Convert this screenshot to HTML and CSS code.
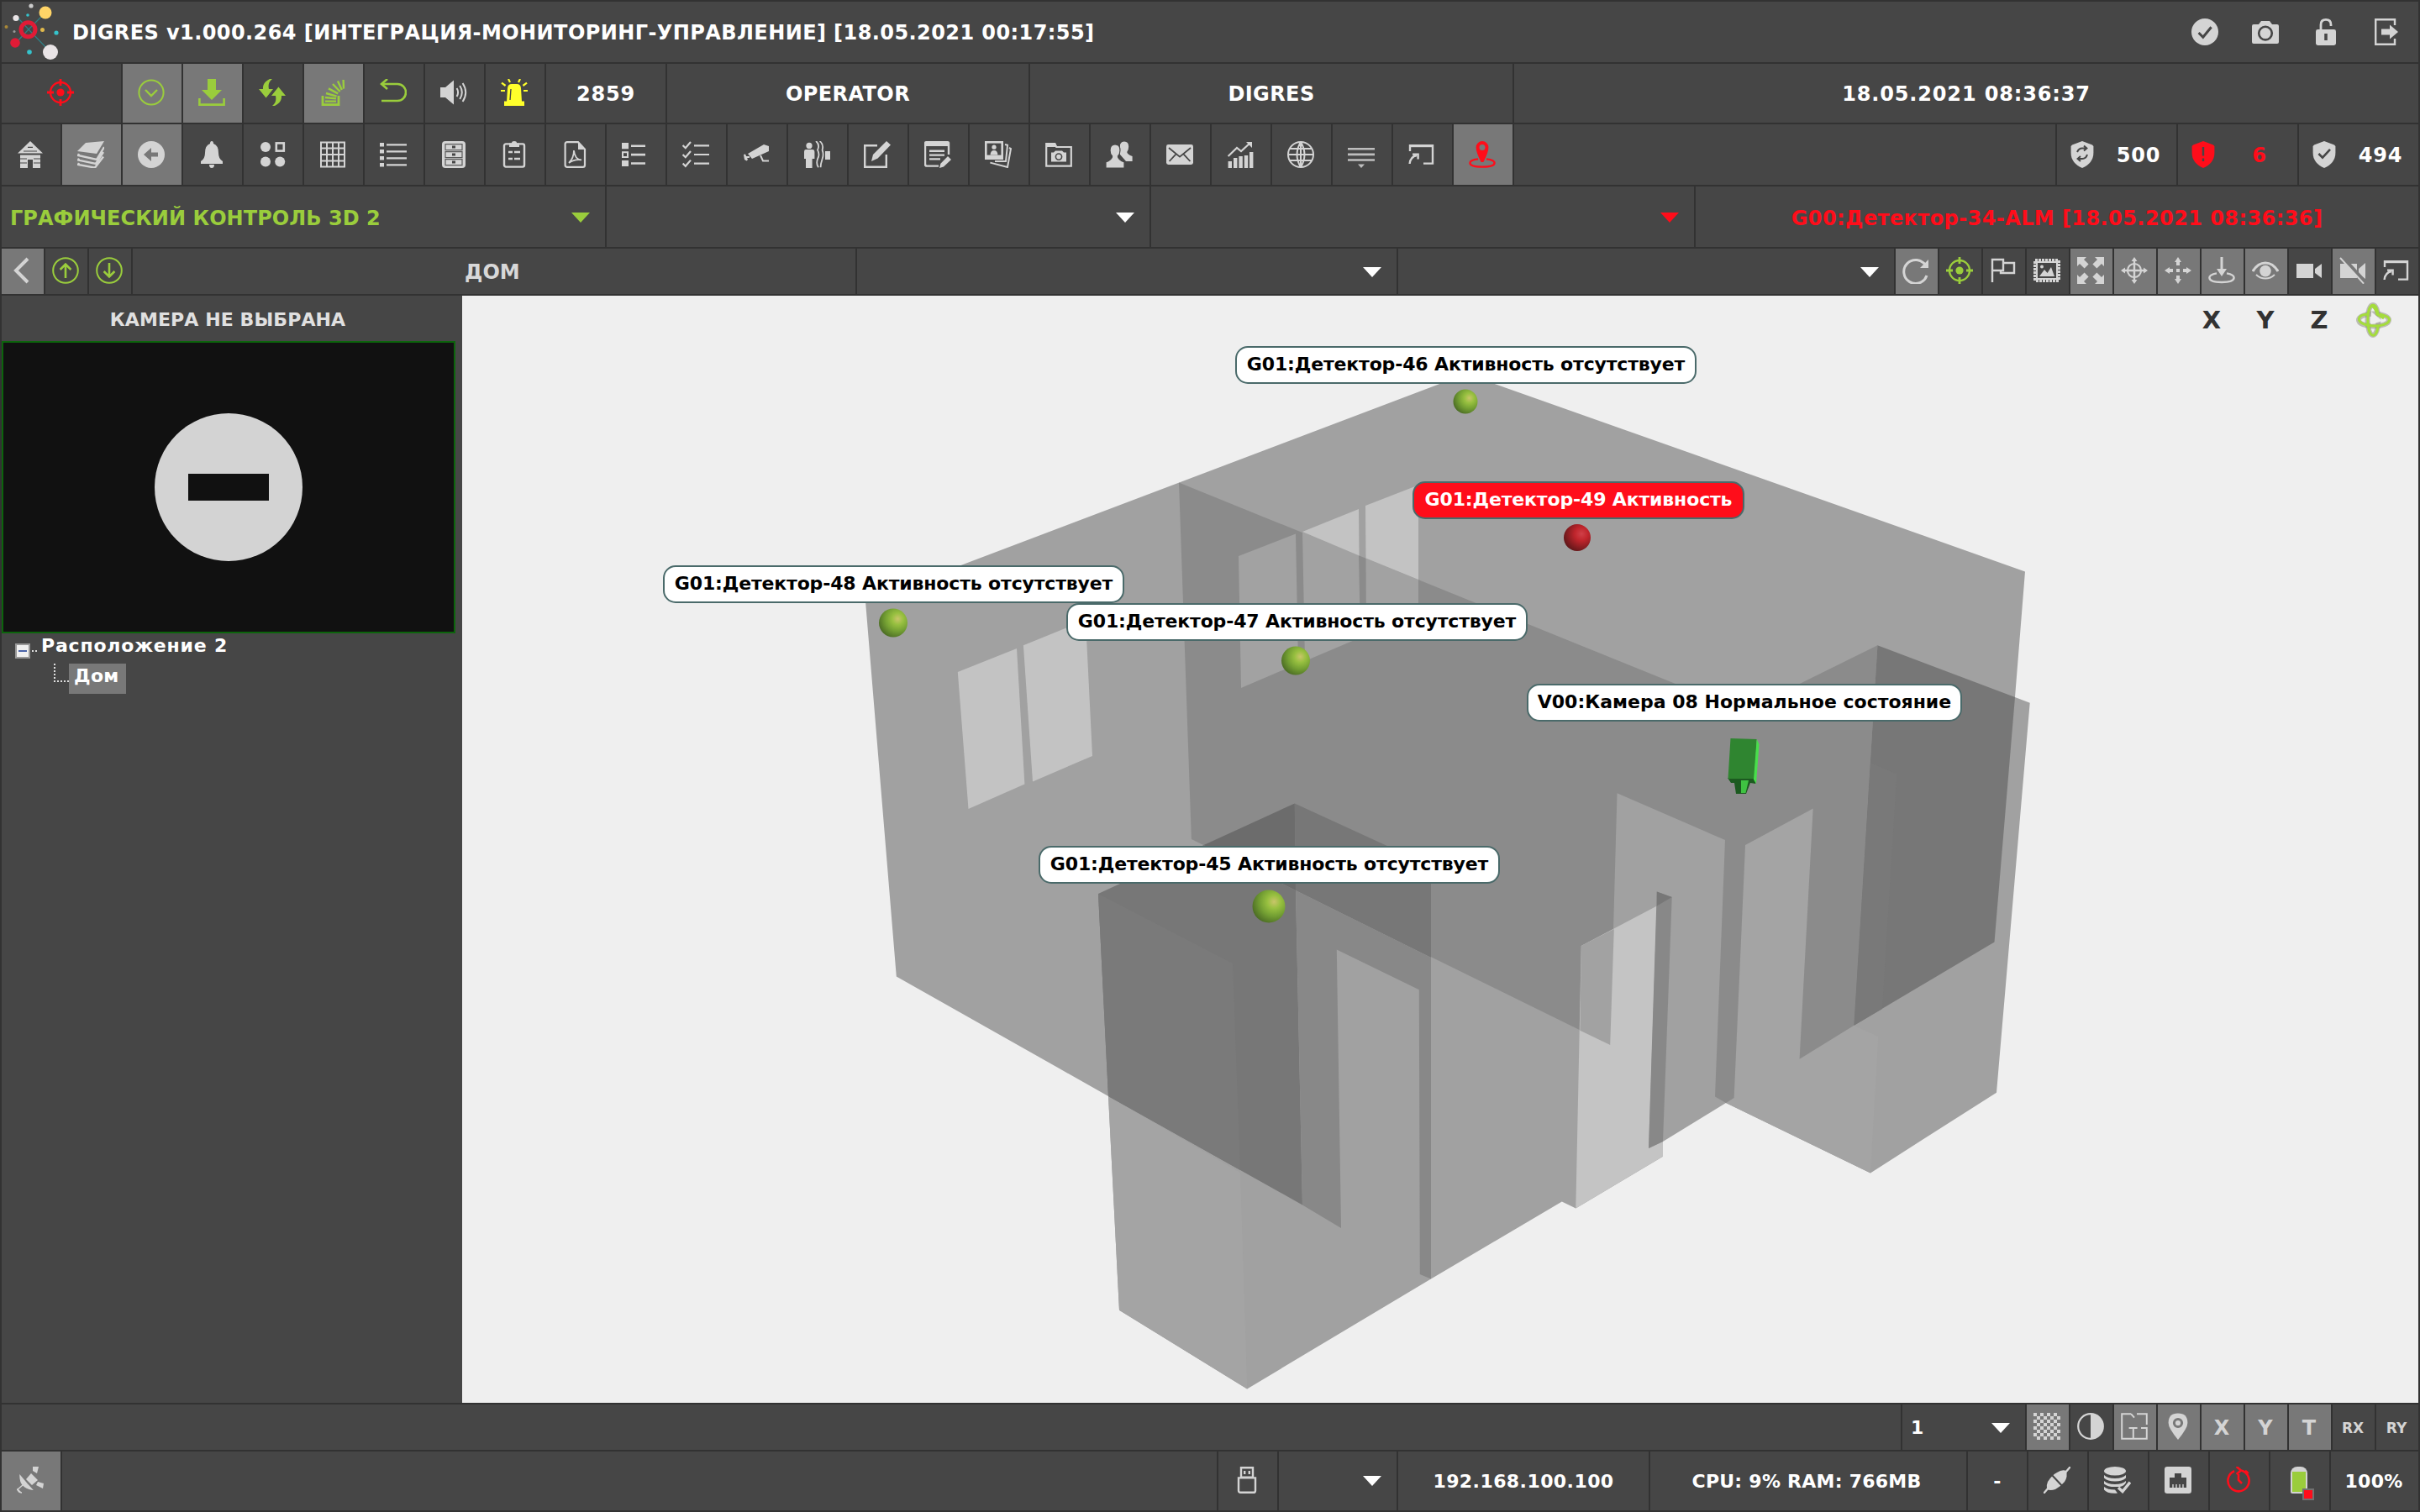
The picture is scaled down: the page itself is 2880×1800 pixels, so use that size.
FILE: index.html
```html
<!DOCTYPE html>
<html lang="ru">
<head>
<meta charset="utf-8">
<title>DIGRES</title>
<link rel="stylesheet" href="styles.css">
</head>
<body>
<svg class="sprite" xmlns="http://www.w3.org/2000/svg">
  <symbol id="target" viewBox="0 0 16 16"><circle cx="8" cy="8" r="6" fill="none" stroke="currentColor" stroke-width="1.2"/><circle cx="8" cy="8" r="2.300" fill="currentColor"/><path d="M8 0v4M8 12v4M0 8h4M12 8h4" stroke="currentColor" stroke-width="1.4"/></symbol>
  <symbol id="circle-down" viewBox="0 0 16 16"><circle cx="8" cy="8" r="7.3" fill="none" stroke="currentColor" stroke-width="1"/><path d="M4.500 6.500L8 10l3.500-3.500" fill="none" stroke="currentColor" stroke-width="1.200"/></symbol>
  <symbol id="download" viewBox="0 0 16 16"><path d="M5.500 0h5v6.500H14L8 12.500 2 6.500h3.500z" fill="currentColor"/><path d="M.7 11.500v3.800h14.600v-3.800" fill="none" stroke="currentColor" stroke-width="1.300"/></symbol>
  <symbol id="bolts" viewBox="0 0 16 16"><path d="M6.500 0C3.500 1.500 2.300 3.500 2.500 6H0l4.300 5.300L8.500 6H6C5.500 3.500 6 1.500 8 0z M9.500 16c3-1.500 4.200-3.500 4-6H16l-4.300-5.300L7.500 10H10c.5 2.500 0 4.500-2 6z" fill="currentColor"/></symbol>
  <symbol id="stack" viewBox="0 0 16 16"><path d="M2 10v5.300h9.500V10" fill="none" stroke="currentColor" stroke-width="1.400"/><path d="M3.500 13.300h6.500M3.500 11l6.500.7M4 8.500l6.300 1.800M5.500 5.700l5.600 3M8 3l4.300 4.500M11 1.200l2.400 5.300M14.300.500l.2 5.300" stroke="currentColor" stroke-width="1.200"/></symbol>
  <symbol id="undo" viewBox="0 0 16 16"><path d="M1 3h9.500a5 5 0 0 1 0 10H1" fill="none" stroke="currentColor" stroke-width="1.300"/><path d="M4.500 0L1 3l3.500 3" fill="none" stroke="currentColor" stroke-width="1.300"/></symbol>
  <symbol id="sound" viewBox="0 0 16 16"><path d="M0 5h3l5-4.200v14.400L3 11H0z" fill="currentColor"/><path d="M9.800 5.500q1.500 2.500 0 5M11.600 4q2.600 4 0 8M13.300 2.500q3.600 5.500 0 11" fill="none" stroke="currentColor" stroke-width="1"/></symbol>
  <symbol id="siren" viewBox="0 0 16 16"><path d="M3.500 13.500L4 5.500Q4.200 3 6.500 3h3q2.300 0 2.500 2.500l.5 8zM2 13.200h12V16H2z" fill="currentColor"/><path d="M5.500 12.500L6 6" stroke="#464646" stroke-width=".7"/><path d="M5.500 2L4.500 0M10.500 2l1-2M2.800 4L.5 2.300M13.200 4l2.300-1.700M2.500 7H0M13.500 7H16" stroke="currentColor" stroke-width="1.100"/></symbol>
  <symbol id="home" viewBox="0 0 16 16"><path d="M8 0L.5 7.200h15zM2 8.300h12V16H9.500v-5h-3v5H2z" fill="currentColor"/><path d="M4 6h8M6.500 3.700h3M2 10.500h4M10 10.500h4M2 13h4M10 13h4" stroke="#464646" stroke-width=".6"/></symbol>
  <symbol id="layers" viewBox="0 0 16 16"><path d="M5 1l11-1-4.500 7.500L0 6z" fill="currentColor"/><path d="M1 7.500l-.5 1 11 2.500L16 3.500M1 10.300l-.5 1L11 13.500l4.500-7M1 13l-.5 1 10 1.800 5-6.500" fill="none" stroke="currentColor" stroke-width="1.200"/></symbol>
  <symbol id="back" viewBox="0 0 16 16"><circle cx="8" cy="8" r="8" fill="currentColor"/><path d="M3.500 8L8 4v2.800h4v2.400H8V12z" fill="#787878"/></symbol>
  <symbol id="bell" viewBox="0 0 16 16"><path d="M8 0q1 0 1 1.500Q12 2.500 12 7q0 3.500 2.500 5v1.500h-13V12Q4 10.500 4 7q0-4.500 3-5.500Q7 0 8 0zM6.500 14h3q0 2-1.500 2t-1.500-2z" fill="currentColor"/></symbol>
  <symbol id="dots" viewBox="0 0 16 16"><circle cx="4" cy="3.500" r="3" fill="currentColor"/><rect x="10.400" y="1.200" width="4.500" height="4.600" fill="none" stroke="currentColor" stroke-width="1.300"/><circle cx="4" cy="12.300" r="3" fill="currentColor"/><circle cx="12.600" cy="12.300" r="3" fill="currentColor"/></symbol>
  <symbol id="grid" viewBox="0 0 16 16"><path d="M1 .7h14v14.600H1zM1 4.300h14M1 8h14M1 11.700h14M4.500.7v14.600M8 .7v14.600M11.500.7v14.600" fill="none" stroke="currentColor" stroke-width="1"/></symbol>
  <symbol id="list" viewBox="0 0 16 16"><path d="M0 1h2.500v2.300H0zM0 5h2.500v2.300H0zM0 9h2.500v2.300H0zM0 13h2.500v2.300H0zM4 1.600h12v1.200H4zM4 5.600h12v1.200H4zM4 9.600h12v1.200H4zM4 13.600h12v1.200H4z" fill="currentColor"/></symbol>
  <symbol id="drawers" viewBox="0 0 16 16"><rect x="1" y="0" width="14" height="16" rx="2" fill="currentColor"/><path d="M3 1.800h10v3.500H3zM3 6.300h10v3.500H3zM3 10.800h10v3.500H3z" fill="none" stroke="#5a5a5a" stroke-width=".6"/><path d="M7 3.500h2M7 8h2M7 12.500h2" stroke="#464646" stroke-width="1.400"/></symbol>
  <symbol id="clipboard" viewBox="0 0 16 16"><rect x="2" y="1.700" width="12" height="13.600" rx="1" fill="none" stroke="currentColor" stroke-width="1.200"/><path d="M5 3.500V1.200h1.500Q6.500 0 8 0t1.500 1.200H11v2.300z" fill="currentColor"/><path d="M4.500 6.500H7M4.500 10.500H7M8 6.500h3.500M8 10.500h3.500" stroke="currentColor" stroke-width="1.300"/></symbol>
  <symbol id="pdf" viewBox="0 0 16 16"><path d="M3.500.6H10L14 4.800v9.400q0 1.200-1.200 1.200H3.500q-1.200 0-1.200-1.200V1.800Q2.300.6 3.500.6z" fill="none" stroke="currentColor" stroke-width="1.100"/><path d="M10 .6V5h4z" fill="currentColor"/><path d="M4.500 13q3-3 3-7.500Q8 11 12 11.200 8 10.500 4.500 13" fill="none" stroke="currentColor" stroke-width=".9"/></symbol>
  <symbol id="boxlist" viewBox="0 0 16 16"><path d="M0 1h4v3.600H0zM5.500 2.200H14v1.300H5.500zM5.500 7.400H14v1.300H5.500zM0 11.500h4V15H0zM5.500 12.600H14v1.300H5.500z" fill="currentColor"/><rect x=".5" y="6.600" width="3" height="2.900" fill="none" stroke="currentColor"/></symbol>
  <symbol id="checks" viewBox="0 0 16 16"><path d="M.3 2.500l1.600 1.600L5 .500M.3 8l1.600 1.600L5 6M.3 13.300l1.600 1.600L5 11.300" fill="none" stroke="currentColor" stroke-width="1.100"/><path d="M7 2.700h9M7 8h9M7 13.300h9" stroke="currentColor" stroke-width="1.100"/></symbol>
  <symbol id="cctv" viewBox="0 0 16 16"><path d="M3 7.500L12.500 2 15.500 3v3L5.500 10.500zM.5 8l1-.3L3 11l-.7.800L1 11z" fill="currentColor"/><path d="M2 9.500h2M10.500 8.500l1.500 3.200h3.500" fill="none" stroke="currentColor" stroke-width="1"/></symbol>
  <symbol id="motion" viewBox="0 0 16 16"><circle cx="3.500" cy="2.700" r="1.800" fill="currentColor"/><path d="M1.500 5h4Q6.700 5 6.700 6.500V10.500H5.300V16H1.500v-5.500H.5v-4Q.5 5 1.500 5zM13 6h3v5h-3z" fill="currentColor"/><path d="M7.500 0q2.500 2 1 5.300 1.500 2.700 0 5.300-1 3 .5 5M9.800 0q2.500 2 1.500 5.300 1 2.700 0 5.300-1 3-1 5" fill="none" stroke="currentColor" stroke-width=".9"/></symbol>
  <symbol id="edit" viewBox="0 0 16 16"><path d="M8 2.600H.6v12.800h12.800V8" fill="none" stroke="currentColor" stroke-width="1.200"/><path d="M13.500 0L16 2.300 8.300 10.300 4.500 12l1-4z" fill="currentColor"/></symbol>
  <symbol id="form-edit" viewBox="0 0 16 16"><path d="M8.500 14.800H1.500q-1 0-1-1V1.300h14V8" fill="none" stroke="currentColor" stroke-width="1.200"/><path d="M0 1q0-1 1-1h13q1 0 1 1v2H0zM3 5.300h9v1.200H3zM3 7.700h9v1.200H3zM3 10.100h6.500v1.200H3zM14 9l2 2-4.500 4.300L9 16l.7-2.600z" fill="currentColor"/></symbol>
  <symbol id="photos" viewBox="0 0 16 16"><path d="M0 0h11v11H0z" fill="currentColor"/><path d="M1.300 1.300h8.400v7H1.300z" fill="#464646"/><circle cx="5.500" cy="3.600" r="1.300" fill="currentColor"/><path d="M3.300 8.300Q3.300 5.500 5.500 5.500t2.200 2.800z" fill="currentColor"/><path d="M12 2l1.500.4-1 9.600H6M14.500 4l1 .5-2 11-10.300-2.700" fill="none" stroke="currentColor" stroke-width="1"/></symbol>
  <symbol id="folder-cam" viewBox="0 0 16 16"><path d="M.6 14.800V1.500h5l1 2h8.800v11.300z" fill="none" stroke="currentColor" stroke-width="1.100"/><path d="M.5 1h5.500l1 2.500H.5zM3.500 6.800H5l1-1h4l1 1h1.500v5.500h-9z" fill="currentColor"/><circle cx="8" cy="9.300" r="1.800" fill="none" stroke="#464646" stroke-width=".8"/></symbol>
  <symbol id="users" viewBox="0 0 16 16"><path d="M11 .3q2.600 0 2.600 3 0 2-1 3.200.3 1.500 3.200 2.500v3H12L8.500 8V2Q9.300.3 11 .3z" fill="currentColor"/><path d="M5.500 2q3 0 3 3.500 0 2.200-1.300 3.500 0 2 3.800 3.500V16H0v-3.500Q3.800 11 3.800 9 2.500 7.700 2.500 5.500 2.500 2 5.500 2z" fill="currentColor" stroke="#464646" stroke-width=".6"/></symbol>
  <symbol id="mail" viewBox="0 0 16 16"><rect x="0" y="2" width="16" height="12" rx="1.200" fill="currentColor"/><path d="M1.500 4L8 9.300 14.500 4M1.800 12l4-4.300M14.200 12l-4-4.300" fill="none" stroke="#464646" stroke-width=".9"/></symbol>
  <symbol id="chart" viewBox="0 0 16 16"><path d="M.8 12H3v4H.8zM4 10h2.200v6H4zM7.200 9h2.200v7H7.200zM10.400 8.500h2.200V16h-2.200zM13.500 6.500h2.200V16h-2.200z" fill="currentColor"/><path d="M.8 9L6 4l2.500 2 5.500-5" fill="none" stroke="currentColor" stroke-width="1.100"/><path d="M11.500.500H15v3.500z" fill="currentColor"/></symbol>
  <symbol id="globe" viewBox="0 0 16 16"><path d="M8 .5a7.500 7.500 0 1 0 0 15 7.500 7.500 0 0 0 0-15zM8 .5v15M.5 8h15M1.500 4.500h13M1.500 11.500h13M8 .5q-4.500 7.500 0 15M8 .5q4.500 7.500 0 15" fill="none" stroke="currentColor" stroke-width="1"/></symbol>
  <symbol id="lines-down" viewBox="0 0 16 16"><path d="M0 4h16v1.300H0zM0 7.300h16v1.300H0zM0 10.600h16v1.300H0zM6 13.800h4L8 16z" fill="currentColor" fill-opacity=".85"/></symbol>
  <symbol id="window-in" viewBox="0 0 16 16"><path d="M1 6V2.600h13.500v10.700H9" fill="none" stroke="currentColor" stroke-width="1.200"/><path d="M.5 2h14.500v1.600H.5z" fill="currentColor"/><path d="M.8 13.500Q1.200 9.300 5 8.500M2.500 7.800h3.300v3" fill="none" stroke="currentColor" stroke-width="1.200"/></symbol>
  <symbol id="map-pin" viewBox="0 0 16 16"><path d="M8 0a3.700 3.700 0 0 1 3.700 3.700Q11.700 6.500 8.700 12.500H7.300Q4.300 6.500 4.300 3.700A3.700 3.700 0 0 1 8 0zm0 2a1.700 1.700 0 1 0 0 3.500A1.700 1.700 0 0 0 8 2z" fill="currentColor"/><path d="M5.500 10.700Q.7 11.300.7 13q0 2.300 7.300 2.300t7.300-2.300q0-1.700-4.800-2.300" fill="none" stroke="currentColor" stroke-width="1.200"/></symbol>
  <symbol id="shield-sync" viewBox="0 0 16 16"><path d="M8 0l6 2.300.7.700v4q0 6-6.700 9-6.700-3-6.700-9V3L2 2.300z" fill="currentColor"/><path d="M5 6.500Q6 4.300 8 4.300h2.500M9 2.800l1.700 1.500L9 5.800M11 8q-.7 2.500-3 2.500H5.500M7 9l-1.700 1.500L7 12" fill="none" stroke="#464646" stroke-width="1"/></symbol>
  <symbol id="shield-alert" viewBox="0 0 16 16"><path d="M8 0l6 2.300.7.700v4q0 6-6.700 9-6.700-3-6.700-9V3L2 2.300z" fill="currentColor"/><path d="M8 3.500v5.300M8 10.300V12" stroke="#464646" stroke-width="1.200"/></symbol>
  <symbol id="shield-ok" viewBox="0 0 16 16"><path d="M8 0l6 2.300.7.700v4q0 6-6.700 9-6.700-3-6.700-9V3L2 2.300z" fill="currentColor"/><path d="M4.700 7.500L7 9.800l4.500-4.900" fill="none" stroke="#464646" stroke-width="1.300"/></symbol>
  <symbol id="check-circle" viewBox="0 0 16 16"><circle cx="8" cy="8" r="8" fill="currentColor"/><path d="M4.300 8.500l2.600 2.600 4.900-6" fill="none" stroke="#464646" stroke-width="1.500"/></symbol>
  <symbol id="camera" viewBox="0 0 16 16"><path d="M1 3.500h3L5.500 1.500h5L12 3.500h3q1 0 1 1V14q0 1-1 1H1q-1 0-1-1V4.500q0-1 1-1z" fill="currentColor"/><circle cx="8" cy="8.800" r="3.900" fill="none" stroke="#464646" stroke-width="1.300"/></symbol>
  <symbol id="unlock" viewBox="0 0 16 16"><rect x="2" y="6.500" width="12" height="9.500" rx="1.200" fill="currentColor"/><path d="M5 6.500V3.700Q5 .7 8 .7t3 3V4.500" fill="none" stroke="currentColor" stroke-width="1.400"/><path d="M8 9v4" stroke="#464646" stroke-width="1.800"/></symbol>
  <symbol id="exit" viewBox="0 0 16 16"><path d="M13 4V.600H1.600v14.800H13V12" fill="none" stroke="currentColor" stroke-width="1.200"/><path d="M5 6.300h5V3.700L15 8l-5 4.300V9.700H5z" fill="currentColor"/></symbol>
  <symbol id="chevron-left" viewBox="0 0 16 16"><path d="M11.500 1L4.500 8l7 7" fill="none" stroke="currentColor" stroke-width="2"/></symbol>
  <symbol id="circle-up-arrow" viewBox="0 0 16 16"><circle cx="8" cy="8" r="7.400" fill="none" stroke="currentColor"/><path d="M8 12.500v-8M4.800 7.500L8 4.300l3.200 3.200" fill="none" stroke="currentColor" stroke-width="1.300"/></symbol>
  <symbol id="circle-down-arrow" viewBox="0 0 16 16"><circle cx="8" cy="8" r="7.400" fill="none" stroke="currentColor"/><path d="M8 3.500v8M4.800 8.500L8 11.700l3.200-3.200" fill="none" stroke="currentColor" stroke-width="1.300"/></symbol>
  <symbol id="reload" viewBox="0 0 16 16"><path d="M13.800 5A7 7 0 1 0 14.500 11" fill="none" stroke="currentColor" stroke-width="1.500"/><path d="M15.500 1.500v5h-5z" fill="currentColor"/></symbol>
  <symbol id="flag" viewBox="0 0 16 16"><path d="M1.500 15V1.500H8V8H1.500M8 3.500h6.500v6H6.500V8" fill="none" stroke="currentColor" stroke-width="1.200"/></symbol>
  <symbol id="picture" viewBox="0 0 16 16"><rect x="1" y="2" width="14" height="12" fill="none" stroke="currentColor" stroke-width="2" stroke-dasharray="1.500 .5"/><rect x="2" y="3" width="12" height="10" fill="none" stroke="currentColor" stroke-width="1"/><path d="M3.500 11.500L6.500 7.500l1.800 2L10.500 6l2 5.500z" fill="currentColor"/><circle cx="5" cy="5.700" r="1" fill="currentColor"/></symbol>
  <symbol id="expand" viewBox="0 0 16 16"><path d="M0 0h5.500L4 1.500l2.800 2.800-2.500 2.500L1.500 4 0 5.500zM16 0h-5.500L12 1.500 9.200 4.300l2.500 2.500L14.500 4 16 5.500zM0 16h5.500L4 14.500l2.800-2.800-2.500-2.500L1.500 12 0 10.500zM16 16h-5.500l1.500-1.500-2.800-2.800 2.500-2.500 2.800 2.800 1.500-1.500z" fill="currentColor"/></symbol>
  <symbol id="crosshair" viewBox="0 0 16 16"><circle cx="8" cy="8" r="4" fill="none" stroke="currentColor" stroke-width="1.100"/><path d="M8 1v14M1 8h14" stroke="currentColor" stroke-width="1.200"/><path d="M8 0l1.700 2.500H6.300zM8 16l1.700-2.500H6.300zM0 8l2.500-1.700v3.400zM16 8l-2.500-1.700v3.400z" fill="currentColor"/></symbol>
  <symbol id="move" viewBox="0 0 16 16"><path d="M8 0l2 3H9v2H7V3H6zM8 16l2-3H9v-2H7v2H6zM0 8l3-2v1h2v2H3v1zM16 8l-3-2v1h-2v2h2v1zM7 7h2v2H7z" fill="currentColor"/></symbol>
  <symbol id="drop-pin" viewBox="0 0 16 16"><path d="M8 0v9" stroke="currentColor" stroke-width="1.500"/><path d="M5 7h6l-3 4.500z" fill="currentColor"/><path d="M5 9.700Q.7 10.500.7 12.300q0 2.700 7.300 2.700t7.300-2.700Q15.300 10.500 11 9.700" fill="none" stroke="currentColor" stroke-width="1.200"/></symbol>
  <symbol id="eye" viewBox="0 0 16 16"><path d="M.5 8.500Q3.500 3.500 8 3.500t7.500 5" fill="none" stroke="currentColor" stroke-width="1.600"/><circle cx="8" cy="8.300" r="3.400" fill="currentColor"/><path d="M2.500 10.500Q5 12.800 8 12.800t5.500-2.300" fill="none" stroke="currentColor" stroke-width="1"/></symbol>
  <symbol id="video" viewBox="0 0 16 16"><path d="M.5 4h10v8.500H.5zM11.500 7L15.500 4v8.500l-4-3z" fill="currentColor"/></symbol>
  <symbol id="video-off" viewBox="0 0 16 16"><path d="M.5 4h10v8.500H.5zM11.500 7L15.500 3.500v9.500l-4-3z" fill="currentColor"/><path d="M1.700 0L15.700 15.500" stroke="#787878" stroke-width="2.400"/><path d="M.5 .5L14.500 15.800" stroke="currentColor" stroke-width="1"/></symbol>
  <symbol id="checker" viewBox="0 0 16 16"><path d="M0 1h16M0 5h16M0 9h16M0 13h16" stroke="currentColor" stroke-width="2" stroke-dasharray="2 2"/><path d="M2 3h14M2 7h14M2 11h14M2 15h14" stroke="currentColor" stroke-width="2" stroke-dasharray="2 2"/></symbol>
  <symbol id="contrast" viewBox="0 0 16 16"><circle cx="8" cy="8" r="7.400" fill="none" stroke="currentColor" stroke-width="1.100"/><path d="M8 .5a7.500 7.500 0 0 1 0 15z" fill="currentColor"/></symbol>
  <symbol id="plan" viewBox="0 0 16 16"><path d="M6 .6H.6v14.800h14.800V9H12M9.500.6h5.900V7M6 .6L8 2.800M4.800 9h5M7.400 9v6" fill="none" stroke="currentColor" stroke-width="1"/></symbol>
  <symbol id="place" viewBox="0 0 16 16"><path d="M8 .3q5.700 0 5.700 5.700 0 3-5.700 10Q2.300 9 2.300 6 2.300.3 8 .3z" fill="currentColor"/><circle cx="8" cy="6" r="2.300" fill="none" stroke="#787878" stroke-width="1.500"/></symbol>
  <symbol id="satellite" viewBox="0 0 16 16"><path d="M8.500 4l4 4-3.500 3L5.500 7.500zM9.500 0L13 0l-1 4-2.500-1.500zM12.500 9l3.500 1-.5 3-4-2z" fill="currentColor"/><path d="M2 5.500q0 7 7 8l-3-3.300zM0 14l3.500-3M3 15.500q-2.500 0-2.500-2.500" fill="currentColor" stroke="currentColor" stroke-width=".7"/></symbol>
  <symbol id="usb" viewBox="0 0 16 16"><path d="M4.500.6h7v5.700h-7zM3 6.700h10v7.500q0 1.200-1.200 1.200H4.200Q3 15.400 3 14.200z" fill="none" stroke="currentColor" stroke-width="1.200"/><path d="M6.600 2.500v2M9.400 2.500v2" stroke="currentColor" stroke-width="1.200"/></symbol>
  <symbol id="plug" viewBox="0 0 16 16"><path d="M0 16l3-3.500M13 3.500L16 0" stroke="currentColor" stroke-width="1.200"/><path d="M2.500 9Q5 5 8 3.500 11 1.500 13.500 2.500 14.500 6 12.500 9 10 12 7 13.500 4 14.500 2 13.500 1.500 11 2.500 9z" fill="currentColor"/><path d="M4.500 4.500l7.500 8" stroke="#464646" stroke-width="1"/></symbol>
  <symbol id="database" viewBox="0 0 16 16"><ellipse cx="6.500" cy="2.600" rx="6.500" ry="2.600" fill="currentColor"/><path d="M0 5q2 2 6.500 2T13 5v1.800q-2 2-6.500 2T0 6.800zM0 8.500q2 2 6.500 2t6.500-2v1q-1 2-3.500 2.500H6.500Q2 12 0 10.200zM0 12q2 1.800 6.500 1.800l1.500 2q-6 .5-8-2z" fill="currentColor"/><path d="M8.500 12.500l2.500 2.300 4.500-5.500" fill="none" stroke="currentColor" stroke-width="1.700"/></symbol>
  <symbol id="lan" viewBox="0 0 16 16"><rect width="16" height="16" rx="1.600" fill="currentColor"/><path d="M3 12.500v-6h3V4h4v2.500h3v6z" fill="#464646"/><path d="M5 12.500v-2M7 12.500v-2M9 12.500v-2M11 12.500v-2" stroke="currentColor" stroke-width=".7"/></symbol>
  <symbol id="clock" viewBox="0 0 16 16"><path d="M5.500 2.600A6.300 6.300 0 1 0 10 2.400M6.800 0l2.700 2.200L6.800 4.500M12 2.500q1 .5 1.800 1.600" fill="none" stroke="currentColor" stroke-width="1.300"/><path d="M8 4.500V8l2 2" fill="none" stroke="currentColor" stroke-width="1.300"/></symbol>
</svg>

<div class="app">
  <header class="row titlebar">
    <div class="cell grow brand">
      <svg class="logo" viewBox="0 0 72 72">
        <path d="M32 33L52 13M32 33L17 49M32 33L58 60M20 20l12 13" stroke="#2f7f86" stroke-width="1.200"/>
        <circle cx="31.500" cy="33.300" r="8.500" fill="none" stroke="#e01b36" stroke-width="5"/>
        <circle cx="52" cy="13" r="7.500" fill="#ffd467"/><circle cx="58" cy="60" r="9" fill="#e9e4e6"/><circle cx="16" cy="49" r="5.800" fill="#e01b36"/>
        <circle cx="17" cy="19.500" r="3.600" fill="#e9e4e6"/><circle cx="35" cy="5" r="2.600" fill="#ccc"/><circle cx="31" cy="16" r="1.800" fill="#35c3cc"/><circle cx="65" cy="37" r="2.600" fill="#35c3cc"/><circle cx="33" cy="60" r="2.800" fill="#35c3cc"/><circle cx="48.500" cy="33.500" r="2.500" fill="#e0b94c"/><circle cx="5.500" cy="30" r="2" fill="#a98838"/><circle cx="15" cy="35.500" r="1.500" fill="#999"/>
      </svg>
      <span class="txt">DIGRES v1.000.264 [ИНТЕГРАЦИЯ-МОНИТОРИНГ-УПРАВЛЕНИЕ] [18.05.2021 00:17:55]</span>
      <div class="tools">
        <svg class="ico"><use href="#check-circle"/></svg><svg class="ico"><use href="#camera"/></svg><svg class="ico"><use href="#unlock"/></svg><svg class="ico"><use href="#exit"/></svg>
      </div>
    </div>
  </header>

  <div class="row status">
    <div class="cell c142 red"><svg class="ico"><use href="#target"/></svg></div>
    <div class="cell c70 on green"><svg class="ico"><use href="#circle-down"/></svg></div>
    <div class="cell c70 on green"><svg class="ico"><use href="#download"/></svg></div>
    <div class="cell c70 green"><svg class="ico"><use href="#bolts"/></svg></div>
    <div class="cell c70 on green"><svg class="ico"><use href="#stack"/></svg></div>
    <div class="cell c70 green"><svg class="ico"><use href="#undo"/></svg></div>
    <div class="cell c70"><svg class="ico"><use href="#sound"/></svg></div>
    <div class="cell c70 yellow"><svg class="ico"><use href="#siren"/></svg></div>
    <div class="cell c142"><span class="txt num">2859</span></div>
    <div class="cell c430"><span class="txt">OPERATOR</span></div>
    <div class="cell c574"><span class="txt">DIGRES</span></div>
    <div class="cell grow"><span class="txt num">18.05.2021 08:36:37</span></div>
  </div>

  <div class="row nav">
    <div class="cell c70"><svg class="ico"><use href="#home"/></svg></div>
    <div class="cell c70 on"><svg class="ico"><use href="#layers"/></svg></div>
    <div class="cell c70 on"><svg class="ico"><use href="#back"/></svg></div>
    <div class="cell c70"><svg class="ico"><use href="#bell"/></svg></div>
    <div class="cell c70"><svg class="ico"><use href="#dots"/></svg></div>
    <div class="cell c70"><svg class="ico"><use href="#grid"/></svg></div>
    <div class="cell c70"><svg class="ico"><use href="#list"/></svg></div>
    <div class="cell c70"><svg class="ico"><use href="#drawers"/></svg></div>
    <div class="cell c70"><svg class="ico"><use href="#clipboard"/></svg></div>
    <div class="cell c70"><svg class="ico"><use href="#pdf"/></svg></div>
    <div class="cell c70"><svg class="ico"><use href="#boxlist"/></svg></div>
    <div class="cell c70"><svg class="ico"><use href="#checks"/></svg></div>
    <div class="cell c70"><svg class="ico"><use href="#cctv"/></svg></div>
    <div class="cell c70"><svg class="ico"><use href="#motion"/></svg></div>
    <div class="cell c70"><svg class="ico"><use href="#edit"/></svg></div>
    <div class="cell c70"><svg class="ico"><use href="#form-edit"/></svg></div>
    <div class="cell c70"><svg class="ico"><use href="#photos"/></svg></div>
    <div class="cell c70"><svg class="ico"><use href="#folder-cam"/></svg></div>
    <div class="cell c70"><svg class="ico"><use href="#users"/></svg></div>
    <div class="cell c70"><svg class="ico"><use href="#mail"/></svg></div>
    <div class="cell c70"><svg class="ico"><use href="#chart"/></svg></div>
    <div class="cell c70"><svg class="ico"><use href="#globe"/></svg></div>
    <div class="cell c70"><svg class="ico"><use href="#lines-down"/></svg></div>
    <div class="cell c70"><svg class="ico"><use href="#window-in"/></svg></div>
    <div class="cell c70 on red"><svg class="ico"><use href="#map-pin"/></svg></div>
    <div class="cell grow"></div>
    <div class="cell counter"><svg class="ico"><use href="#shield-sync"/></svg><span class="txt num">500</span></div>
    <div class="cell counter red"><svg class="ico"><use href="#shield-alert"/></svg><span class="txt num">6</span></div>
    <div class="cell counter"><svg class="ico"><use href="#shield-ok"/></svg><span class="txt num">494</span></div>
  </div>

  <div class="row selects">
    <div class="cell select s1 green"><span class="txt">ГРАФИЧЕСКИЙ КОНТРОЛЬ 3D 2</span><i class="caret"></i></div>
    <div class="cell select s2"><i class="caret white"></i></div>
    <div class="cell select s2"><i class="caret red"></i></div>
    <div class="cell grow red"><span class="txt">G00:Детектор-34-ALM [18.05.2021 08:36:36]</span></div>
  </div>

  <div class="row scene-bar">
    <div class="cell c50 on"><svg class="ico"><use href="#chevron-left"/></svg></div>
    <div class="cell c50 green"><svg class="ico"><use href="#circle-up-arrow"/></svg></div>
    <div class="cell c50 green"><svg class="ico"><use href="#circle-down-arrow"/></svg></div>
    <div class="cell place"><span class="txt soft">ДОМ</span></div>
    <div class="cell select s3"><i class="caret white"></i></div>
    <div class="cell select grow"><i class="caret white"></i></div>
    <div class="cell c50 on"><svg class="ico"><use href="#reload"/></svg></div>
    <div class="cell c50 green"><svg class="ico"><use href="#target"/></svg></div>
    <div class="cell c50"><svg class="ico"><use href="#flag"/></svg></div>
    <div class="cell c50"><svg class="ico"><use href="#picture"/></svg></div>
    <div class="cell c50 on"><svg class="ico"><use href="#expand"/></svg></div>
    <div class="cell c50 on"><svg class="ico"><use href="#crosshair"/></svg></div>
    <div class="cell c50 on"><svg class="ico"><use href="#move"/></svg></div>
    <div class="cell c50 on"><svg class="ico"><use href="#drop-pin"/></svg></div>
    <div class="cell c50 on"><svg class="ico"><use href="#eye"/></svg></div>
    <div class="cell c50"><svg class="ico"><use href="#video"/></svg></div>
    <div class="cell c50 on"><svg class="ico"><use href="#video-off"/></svg></div>
    <div class="cell c50"><svg class="ico"><use href="#window-in"/></svg></div>
  </div>

  <main class="main">
    <aside class="side">
      <div class="side-title">КАМЕРА НЕ ВЫБРАНА</div>
      <div class="preview"><div class="no-entry"><div class="bar"></div></div></div>
      <div class="tree">
        <div class="node"><span class="toggle"></span><span class="dots"></span><span class="branch">Расположение 2</span></div>
        <div class="node child"><span class="elbow"></span><span class="leaf">Дом</span></div>
      </div>
    </aside>
    <section class="view">
      <svg class="house" viewBox="550 352 2328 1318">
        <defs>
          <radialGradient id="ball-g" cx=".66" cy=".36" r=".72"><stop offset="0" stop-color="#c9c56a"/><stop offset=".28" stop-color="#98c040"/><stop offset=".6" stop-color="#74a033"/><stop offset="1" stop-color="#4a6a24"/></radialGradient>
          <radialGradient id="ball-r" cx=".66" cy=".36" r=".72"><stop offset="0" stop-color="#d04048"/><stop offset=".35" stop-color="#c0252c"/><stop offset="1" stop-color="#5c1618"/></radialGradient>
        </defs>
        <polygon fill="#a1a1a1" points="1030,716 1745,445 2410,680.500 2398,830 2415.700,836.700 2376,1300.700 2226,1396.400 2054,1313 1979,1359 1979,1376.800 1875.300,1438.600 1858.800,1430.400 1703,1522.500 1484.200,1653.400 1332,1559.700 1319,1304.900 1066.800,1162.600"/>
        <polygon fill="#a4a4a4" points="1319,1305 1476,1396 1484.200,1653.400 1332,1559.700"/>
        <polygon fill="#a4a4a4" points="2077,1006 2157.700,962.500 2141.600,1260.700 2206,1220.700 2235.300,1234 2226,1396.400 2054,1313 2063.600,1307"/>
        <!-- windows of the left wall -->
        <polygon fill="#c3c3c3" points="1139.800,800 1210,772 1219.400,933.600 1152.500,963"/>
        <polygon fill="#c3c3c3" points="1217.900,768.300 1292,738 1300,900 1229,930.400"/>
        <!-- inner wall -->
        <polygon fill="#8b8b8b" points="1403,574.500 2075,847 2234.400,768.300 2206.400,1220.700 2141.600,1260.700 2157.700,962.500 2077,1006 2063.600,1307 2054,1313 2041,1305.400 2053,1000 1924.500,944.300 1916.200,1244 1417.900,999"/>
        <!-- windows of the back wall -->
        <polygon fill="#a2a2a2" points="1474,662 1542,635.500 1545,790 1477,819"/>
        <polygon fill="#a2a2a2" points="1550,633 1617,661 1619,759 1553,787"/>
        <polygon fill="#a2a2a2" points="1625.500,664.500 1688,690 1688,730 1626,756"/>
        <polygon fill="#c3c3c3" points="1550,633 1617,606 1617.500,661.500"/>
        <polygon fill="#c3c3c3" points="1625,602 1688,577.500 1688,690 1625.500,664.500"/>
        <!-- right wing -->
        <polygon fill="#777" points="2234.400,768.300 2398,830 2373.500,1121.400 2206.400,1220.700"/>
        <polygon fill="#797979" points="2226,908 2257.300,921.400 2240,1201 2206.400,1220.700"/>
        <!-- entrance wing -->
        <polygon fill="#777" points="1307,1064 1432.600,1006 1542,1060 1550,1434.400 1319,1305"/>
        <polygon fill="#7a7a7a" points="1307,1064 1467,1147 1476,1393 1319,1305"/>
        <polygon fill="#6c6c6c" points="1432.600,1006 1540.800,956.400 1542,1060"/>
        <polygon fill="#777" points="1540.800,956.400 1703,1031 1703,1140 1542,1060"/>
        <polygon fill="#888" points="1542,1060 1703,1140 1703,1522.500 1689.800,1517 1688.800,1178.200 1590.800,1130.400 1596,1462 1550,1434.400"/>
        <!-- front door -->
        <polygon fill="#c4c4c4" points="1881.800,1126 1971.800,1078.600 1962,1367 1979,1359 1979,1376.800 1875.300,1438.600"/>
        <polygon fill="#a2a2a2" points="1881.800,1126 1920.800,1106 1916.200,1244 1880.400,1226.800"/>
        <polygon fill="#888" points="1971.800,1061.400 1989.700,1067.900 1979,1359 1962,1367"/>
        <polygon fill="#777" points="1971.800,1061.400 1989.700,1067.900 1971.800,1078.600"/>
        <!-- camera -->
        <polygon fill="#1c5a20" points="2056,926 2088,927 2089.500,933 2083,932 2078,945 2066,945 2064,932 2060,932"/>
        <polygon fill="#3fc342" points="2072,929 2081,929 2077.500,944 2072,944"/>
        <polygon fill="#2f8530" points="2059.500,879 2090.700,880 2088,927 2056.500,927"/>
        <polygon fill="#48df4b" points="2090.700,880 2093.500,886 2090,933 2087,928"/>
        <g fill="url(#ball-g)"><circle cx="1744" cy="478" r="14.500"/><circle cx="1063" cy="741.500" r="17"/><circle cx="1542" cy="786.500" r="17"/><circle cx="1510" cy="1079" r="19.500"/></g>
        <circle cx="1877" cy="640" r="16" fill="url(#ball-r)"/>
      </svg>
      <div class="tag t46">G01:Детектор-46 Активность отсутствует</div>
      <div class="tag t49 alarm">G01:Детектор-49 Активность</div>
      <div class="tag t48">G01:Детектор-48 Активность отсутствует</div>
      <div class="tag t47">G01:Детектор-47 Активность отсутствует</div>
      <div class="tag t08">V00:Камера 08 Нормальное состояние</div>
      <div class="tag t45">G01:Детектор-45 Активность отсутствует</div>
      <div class="axes"><span>X</span><span>Y</span><span>Z</span>
        <svg class="orbit" viewBox="0 0 44 44"><g fill="none" stroke="#8a8a7a" stroke-opacity=".5" stroke-width="6"><ellipse cx="21" cy="22" rx="6.500" ry="18"/><ellipse cx="22" cy="22" rx="18" ry="7.500"/></g><g fill="none" stroke="#a4dc3c" stroke-width="3"><path d="M27 16C26 0 16 0 15 18c-1 26 10 28 12 12"/><path d="M15 15C2 16 0 24 14 28c16 3 29-2 26-8-2-3-7-4-11-5"/></g><path d="M19 12v15l13-4z" fill="#efefef"/><path d="M20 5q5 4 6 10l8 5" fill="none" stroke="#a4dc3c" stroke-width="3"/></svg>
      </div>
    </section>
  </main>

  <div class="row zoom-bar">
    <div class="cell grow"></div>
    <div class="cell select level"><span class="txt small">1</span><i class="caret white"></i></div>
    <div class="cell c50 on"><svg class="ico"><use href="#checker"/></svg></div>
    <div class="cell c50"><svg class="ico"><use href="#contrast"/></svg></div>
    <div class="cell c50 on"><svg class="ico"><use href="#plan"/></svg></div>
    <div class="cell c50 on"><svg class="ico"><use href="#place"/></svg></div>
    <div class="cell c50 on letter">X</div>
    <div class="cell c50 on letter">Y</div>
    <div class="cell c50 on letter">T</div>
    <div class="cell c50 letter tiny">RX</div>
    <div class="cell c50 letter tiny">RY</div>
  </div>

  <footer class="row foot">
    <div class="cell c70 on"><svg class="ico"><use href="#satellite"/></svg></div>
    <div class="cell grow"></div>
    <div class="cell c70"><svg class="ico"><use href="#usb"/></svg></div>
    <div class="cell select c140"><i class="caret white"></i></div>
    <div class="cell c298"><span class="txt small ip">192.168.100.100</span></div>
    <div class="cell c376"><span class="txt small">CPU: 9% RAM: 766MB</span></div>
    <div class="cell c70"><span class="txt small">-</span></div>
    <div class="cell c70"><svg class="ico"><use href="#plug"/></svg></div>
    <div class="cell c70"><svg class="ico"><use href="#database"/></svg></div>
    <div class="cell c70"><svg class="ico"><use href="#lan"/></svg></div>
    <div class="cell c70 red"><svg class="ico"><use href="#clock"/></svg></div>
    <div class="cell c70"><div class="battery"><i></i><b></b></div></div>
    <div class="cell c104"><span class="txt small">100%</span></div>
  </footer>
</div>
</body>
</html>
```
FILE: styles.css
```css
* { box-sizing: border-box; }
body {
  margin: 0;
  background: #323232;
  font-family: "DejaVu Sans", sans-serif;
  font-weight: bold;
  color: #fff;
}
.sprite { display: none; }
.app {
  width: 2880px;
  height: 1800px;
  padding: 2px;
  display: flex;
  flex-direction: column;
  gap: 2px;
  overflow: hidden;
}
.row { display: flex; gap: 2px; flex: none; }
.titlebar, .nav, .selects { height: 72px; }
.status, .foot { height: 70px; }
.scene-bar, .zoom-bar { height: 54px; }

.cell {
  background: #464646;
  display: flex;
  align-items: center;
  justify-content: center;
  flex: none;
  color: #d4d4d4;
}
.grow { flex: 1; }
.on { background: #787878; }
.green { color: #9acd3c; }
.red { color: #ff0d1a; }
.yellow { color: #ffff2b; }
.c50 { width: 50px; }
.c70 { width: 70px; }
.c104 { width: 104px; padding-right: 2px; }
.c140 { width: 140px; }
.c142 { width: 142px; }
.c298 { width: 298px; }
.c376 { width: 376px; padding-right: 4px; }
.c430 { width: 430px; }
.c574 { width: 574px; }

.ico { width: 32px; height: 32px; flex: none; margin-right: 2px; }
.status .ico, .scene-bar .ico, .zoom-bar .ico, .foot .ico { margin-bottom: 2px; }

.txt {
  padding-top: 2px;
  font-size: 24px;
  line-height: 28px;
  letter-spacing: .42px;
  white-space: pre;
  color: #fff;
}
.green .txt, .red .txt { color: inherit; }
.txt.soft { color: #d8d8d8; letter-spacing: 0; }
.txt.num { letter-spacing: .85px; }
.txt.small { font-size: 22px; letter-spacing: .25px; }
.txt.ip { letter-spacing: .43px; }
.selects .txt { padding-top: 4px; }

.brand { justify-content: flex-start; }
.logo { width: 72px; height: 72px; }
.brand .txt { padding-left: 12px; }
.tools { margin-left: auto; display: flex; gap: 38px; padding-right: 20px; }

.counter { width: 142px; justify-content: flex-start; padding-left: 14px; }
.counter .txt { flex: 1; text-align: center; padding-left: 4px; }

.select { justify-content: flex-end; padding-right: 18px; }
.select .txt { margin-right: auto; padding-left: 10px; }
.s1 { width: 718px; }
.s1 .txt { letter-spacing: .05px; }
.s2 { width: 646px; }
.s3 { width: 642px; }
.place { width: 860px; justify-content: flex-start; padding-left: 395px; }
.level { width: 146px; }
.caret {
  border: 11px solid transparent;
  border-top: 12px solid currentColor;
  border-bottom: 0;
}
.caret.white { color: #fff; }
.selects .caret, .scene-bar .caret, .zoom-bar .caret { margin-top: 1px; }

.main { flex: 1; display: flex; min-height: 0; }
.side { width: 548px; background: #464646; }
.side-title {
  height: 54px;
  padding: 2px 10px 0 0;
  line-height: 54px;
  font-size: 22px;
  letter-spacing: .1px;
  text-align: center;
  color: #e0e0e0;
}
.preview {
  width: 540px;
  height: 348px;
  background: #111;
  border: 2px solid #0c640c;
  display: flex;
  align-items: center;
  justify-content: center;
}
.no-entry {
  width: 176px;
  height: 176px;
  border-radius: 50%;
  background: #d3d3d3;
  display: flex;
  align-items: center;
  justify-content: center;
}
.bar { width: 96px; height: 32px; background: #111; }
.tree { font-size: 22px; }
.node { height: 36px; display: flex; align-items: flex-start; line-height: 29px; padding-left: 16px; }
.toggle {
  width: 18px;
  height: 18px;
  margin-top: 12px;
  border: 2px solid #999;
  background: linear-gradient(#4a64a8, #4a64a8) center / 10px 2px no-repeat, #f0f0f0;
}
.dots { width: 6px; height: 2px; margin: 20px 5px 0 2px; background: repeating-linear-gradient(90deg, #ddd 0 2px, transparent 2px 4px); }
.branch { letter-spacing: .8px; }
.child { padding-left: 62px; }
.elbow { width: 18px; height: 22px; border-left: 2px dotted #ddd; border-bottom: 2px dotted #ddd; }
.leaf { background: #787878; height: 36px; width: 68px; padding-left: 6px; line-height: 30px; letter-spacing: .3px; }

.view { flex: 1; background: #efefef; position: relative; }
.house { display: block; width: 2328px; height: 1318px; }
.tag {
  position: absolute;
  height: 45px;
  width: 549px;
  border: 2px solid #4a6a6a;
  border-radius: 15px;
  background: #fff;
  color: #000;
  font-size: 22px;
  line-height: 39px;
  letter-spacing: -.15px;
  text-align: center;
  white-space: pre;
}
.alarm { background: #ff0d1a; color: #fff; }
.t46 { left: 920px; top: 60px; }
.t49 { left: 1131px; top: 221px; width: 395px; }
.t48 { left: 239px; top: 321px; }
.t47 { left: 719px; top: 366px; }
.t08 { left: 1267px; top: 462px; width: 518px; letter-spacing: 0; }
.t45 { left: 686px; top: 655px; }
.axes {
  position: absolute;
  top: 7px;
  right: 31px;
  display: flex;
  align-items: center;
  height: 44px;
  color: #323232;
  font-size: 29px;
}
.axes span { width: 64px; text-align: center; }
.orbit { width: 44px; height: 44px; margin-left: 11px; }

.letter { font-size: 24px; padding: 1px 2px 0 0; }
.letter.tiny { font-size: 17px; }
.battery {
  position: relative;
  width: 20px;
  height: 32px;
  margin: 0 2px 2px 0;
  padding: 6px 2px 2px;
  background: #d3d3d3;
  border-radius: 8px 8px 2px 2px;
}
.battery i { display: block; height: 24px; background: #9acd3c; }
.battery b {
  position: absolute;
  left: 14px;
  top: 26px;
  width: 14px;
  height: 14px;
  background: #ff0d1a;
  border: 2px solid #707070;
}
```
